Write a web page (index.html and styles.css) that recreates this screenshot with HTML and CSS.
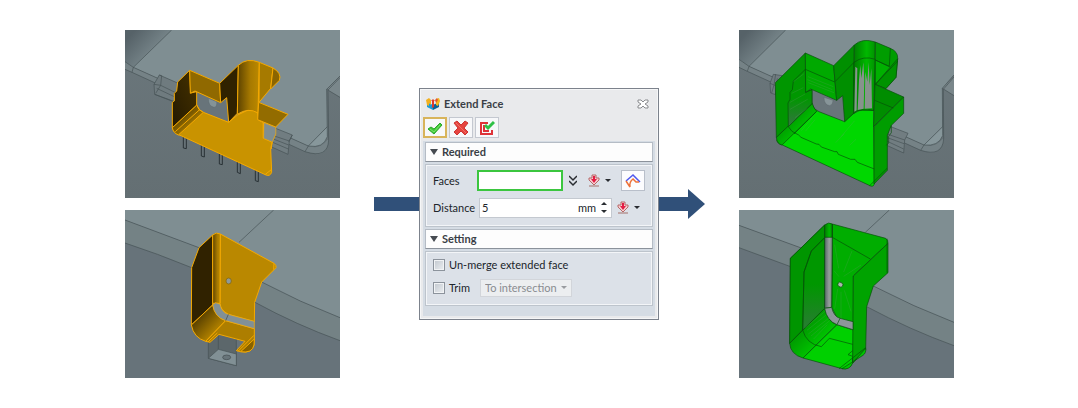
FILE: index.html
```html
<!DOCTYPE html>
<html lang="en">
<head>
    <meta charset="UTF-8">
    <meta name="viewport" content="width=device-width, initial-scale=1.0">
    <title>Extend Face</title>
    <link rel="stylesheet" href="styles.css">
</head>
<body>
    <main class="comparison">
        <div class="views">
            <svg class="view" viewBox="15 15 645 504" role="img" aria-label="Clip before extending">
                <defs>
                    <linearGradient id="plateShade" x1="0" y1="0.3" x2="0.7" y2="0.8">
                        <stop offset="0" stop-color="#566268"/>
                        <stop offset="1" stop-color="#7f8e92"/>
                    </linearGradient>
                    <linearGradient id="base" x1="0" y1="0" x2="0" y2="1">
                        <stop offset="0" stop-color="#6b777c"/>
                        <stop offset="1" stop-color="#646f73"/>
                    </linearGradient>
                    <linearGradient id="goldRound">
                        <stop offset="0" stop-color="#5c4200"/>
                        <stop offset="0.6" stop-color="#a87a00"/>
                        <stop offset="1" stop-color="#bb8900"/>
                    </linearGradient>
                    <linearGradient id="goldDark" x1="1" y1="0" x2="0" y2="1">
                        <stop offset="0" stop-color="#463200"/>
                        <stop offset="1" stop-color="#241900"/>
                    </linearGradient>
                    <linearGradient id="goldFillet" x1="0" y1="0" x2="1" y2="1">
                        <stop offset="0.2" stop-color="#4a3600"/>
                        <stop offset="0.8" stop-color="#c18d00"/>
                    </linearGradient>
                </defs>
                <rect x="15" y="15" width="645" height="504" fill="url(#base)"/>
                <path fill="#7f8e92" d="M15 15H660V153L620 193L622 305L565 363L40 127L15 110Z"/>
                <path fill="url(#plateShade)" d="M15 15H155L40 127L15 110Z"/>
                <path fill="#758286" d="M15 110L40 127L565 363Q600 375 622 345L626 345Q624 386 590 388L555 380L36 142L15 133Z"/>
                <path fill="#87979b" d="M622 305L565 363Q612 371 622 335Z"/>
                <path fill="#7a878b" d="M620 193L660 155V217Z"/>
                <g class="edge">
                    <path d="M155 15L40 127L36 142M15 110L40 127L565 363Q610 371 622 335M15 133L36 142L555 380Q624 402 626 345L624 197M660 153L620 193L622 335M565 363L555 380M622 305L565 363M624 195L660 158M620 193L660 217"/>
                    <path fill="#6f7b7f" d="M118 150L175 175L170 232L104 208L102 178Z"/>
                    <path d="M118 150L125 152L122 181L107 205M102 178L122 181L165 202M110 190L165 216M104 208L160 230"/>
                    <path fill="#717d81" d="M462 308L517 330L508 348L504 388L455 366Z"/>
                    <path d="M460 332L508 348M460 342L506 360M458 352L505 372M517 330L506 350"/>
                    <path class="pin" d="M190 335V369L199 371V340M244 360V393L253 396V365M298 385V417L307 419V390M352 408V442L361 446V414M406 433V467L415 470V440"/>
                </g>
                <path fill="#68747a" d="M230 200L302 233L320 220L326 292L250 262L230 240Z"/>
                <path fill="#849397" stroke="#525e62" d="M265 220Q265 244 282 247Q292 246 290 230Z"/>
                <g class="gold">
                    <path fill="#c99300" d="M230 240Q237 257 250 262L326 292Q352 266 380 257Q402 253 413 262L415 285L430 293V340L457 352L452 370L455 442Q450 455 438 450L185 333Q160 325 157 308Z"/>
                    <path fill="url(#goldFillet)" d="M157 308L230 240Q235 257 250 262L175 330Q159 323 157 308Z"/>
                    <path fill="url(#goldDark)" d="M173 171L209 136L212 204L230 200V240L157 308V232L163 228V205L170 198Z"/>
                    <path fill="#906900" d="M209 136L299 175L302 233L225 198L211 205Z"/>
                    <path fill="#302200" d="M299 175L355 121L352 265L326 292L320 218L302 233Z"/>
                    <path fill="url(#goldRound)" d="M355 121Q380 97 418 112L414 264Q385 246 352 268Z"/>
                    <path fill="#a67a00" d="M418 112L459 129L452 190L417 232Z"/>
                    <path fill="#8b6500" d="M459 129Q486 145 478 166L452 192Z"/>
                    <path fill="#936c00" d="M416 232L504 268L467 306L413 284Z"/>
                    <path fill="none" d="M166 320L240 253M430 293V340M467 306V328L456 352L454 372M436 448L454 434"/>
                </g>
                <path fill="#7f8e92" stroke="#ffb000" d="M432 294L467 308V326L457 350L431 340Z"/>
            </svg>
            <svg class="view" viewBox="15 15 645 504" role="img" aria-label="Pocket before extending">
                <rect x="15" y="15" width="645" height="504" fill="#67737a"/>
                <path fill="#7f8e92" d="M15 15H660V338Q540 292 425 231L237 128L15 45Z"/>
                <path fill="#748285" d="M15 45L237 128L425 231Q540 292 660 338V407Q530 360 405 292L215 188Q110 145 15 114Z"/>
                <path class="edge" d="M461 15L357 112M15 45L237 128M15 114Q110 145 215 188M425 231Q540 292 660 338M405 292Q530 360 660 407"/>
                <path fill="#5c676b" class="edge" d="M265 410L297 385L349 402V482L265 460Z"/>
                <path fill="#819095" class="edge" d="M265 460L295 433L349 447V482Z"/>
                <path class="edge" d="M295 385V433"/>
                <ellipse cx="320" cy="457" rx="12" ry="7" fill="#68757a" stroke="#414a4e" stroke-width="2"/>
                <g class="gold">
                    <path fill="#ba8800" d="M301 87L462 175Q470 181 468 188L425 231L404 292L403 350L325 328Q300 314 300 295Z"/>
                    <path fill="#302200" d="M237 128L278 90V300L214 360L215 188Z"/>
                    <path fill="url(#goldRound)" d="M278 90Q289 80 301 87L300 295H278Z"/>
                    <path fill="url(#goldFillet)" d="M214 360L278 300Q286 337 317 347L257 409Q221 398 214 360Z"/>
                    <path fill="#ad7e00" d="M317 347L403 371V402L402 420Q394 446 362 440L349 437L375 409L297 388L270 412L257 409Z"/>
                    <path fill="#876200" d="M403 402L362 440Q397 446 402 420Z"/>
                    <path fill="none" d="M264 411L292 384M354 439L402 391M462 175L461 194"/>
                </g>
                <path fill="#819096" stroke="#ffb000" stroke-width="2" d="M278 300L286 293L300 297Q305 323 325 328L403 349V371L317 347Q283 336 278 300Z"/>
                <path fill="none" stroke="#434c4f" stroke-width="2" d="M325 328L317 347"/>
                <ellipse cx="326" cy="228" rx="8" ry="9" fill="#8d999a" stroke="#816000" stroke-width="2"/>
            </svg>
        </div>

        <div class="process">
            <span class="arrow"><span class="connector"></span></span>
            <form class="dialog" aria-labelledby="dialogTitle">
                <header class="titlebar">
                    <svg class="logo" viewBox="0 0 14 14" aria-hidden="true">
                        <path fill="#1c9bd6" d="M1 5L7 8V13L1 10Z"/>
                        <path fill="#0b6297" d="M7 8L13 5V10L7 13Z"/>
                        <path fill="#f2b01e" d="M0 3L3 1L5 3V8L3 6V9L1 8Z"/>
                        <path fill="#de3a2c" d="M5 4L7 2L9 4H8V10L6 11V4Z"/>
                        <path fill="#f5b81b" d="M10 2L13 1L14 4L12 9L10 8Z"/>
                        <path fill="#e0592b" d="M9 3L11 1L12 3L10 6Z"/>
                    </svg>
                    <h1 id="dialogTitle">Extend Face</h1>
                    <button type="button" class="close" aria-label="Close">
                        <svg viewBox="0 0 12 10" aria-hidden="true"><path fill="#fff" stroke="#898b8e" d="M1 1H4L6 3L8 1H11V3L8 5L11 7V9H8L6 7L4 9H1V7L4 5L1 3Z"/></svg>
                    </button>
                </header>
                <div class="toolbar">
                    <button type="submit" class="tool active" aria-label="OK">
                        <svg viewBox="0 0 16 16" aria-hidden="true"><path fill="#3cc936" stroke="#2fa52c" d="M1 9L4 7L7 9L13 3L15 5L7 14Z"/><path stroke="#7fe26e" fill="none" d="M3 9L7 12L13 5"/></svg>
                    </button>
                    <button type="button" class="tool" aria-label="Cancel">
                        <svg viewBox="0 0 16 16" aria-hidden="true"><path fill="#e6443f" stroke="#cc3532" d="M1 3L4 1L8 5L12 1L15 3L11 8L15 12L12 15L8 11L4 15L1 12L5 8Z"/><path stroke="#ee7068" fill="none" d="M3 3L13 13"/></svg>
                    </button>
                    <button type="button" class="tool" aria-label="Apply">
                        <svg viewBox="0 0 16 16" aria-hidden="true"><path fill="none" stroke="#de3338" stroke-width="2" d="M9 3H2V14H13V10M8 6H5V11H10"/><path fill="none" stroke="#2fc146" stroke-width="3" d="M6 5L9 8L15 2"/></svg>
                    </button>
                </div>
                <div class="sections">
                    <section>
                        <h2><span class="triangle"></span>Required</h2>
                        <div class="panel required">
                            <div class="row">
                                <label class="name" for="faces">Faces</label>
                                <input class="faces" type="text" id="faces">
                                <button type="button" class="plain more" aria-label="More options">
                                    <svg viewBox="0 0 8 12" aria-hidden="true"><path fill="none" stroke="#292c31" stroke-width="1.5" d="M0 1L4 5L8 1M0 6L4 10L8 6"/></svg>
                                </button>
                                <button type="button" class="plain pick" aria-label="Pick faces">
                                    <svg class="down" viewBox="0 0 12 13" aria-hidden="true"><path fill="#f6d0d0" stroke="#b76768" d="M4 1H8V4H11V6L6 11L1 6V4H4Z"/><path fill="#e31d45" d="M5 2H7V5H9L6 9L3 5H5Z"/><path stroke="#a4706b" d="M1 12H11"/></svg>
                                    <span class="caret"></span>
                                </button>
                                <button type="button" class="curve" aria-label="Select curve">
                                    <svg viewBox="0 0 16 16" aria-hidden="true"><path fill="none" stroke="#5058ee" stroke-width="1.5" d="M1 8L8 2L15 9"/><path fill="none" stroke="#ed7139" stroke-width="1.5" d="M1 8L5 14Q4 9 8 6L11 9H14"/></svg>
                                </button>
                            </div>
                            <div class="row">
                                <label class="name" for="distance">Distance</label>
                                <div class="distance">
                                    <input type="text" id="distance" value="5">
                                    <span>mm</span>
                                    <span class="spinner">
                                        <button type="button" class="plain" aria-label="Increase"><span class="up"></span></button>
                                        <button type="button" class="plain" aria-label="Decrease"><span class="caret"></span></button>
                                    </span>
                                </div>
                                <button type="button" class="plain pick" aria-label="Distance options">
                                    <svg class="down" viewBox="0 0 12 13" aria-hidden="true"><path fill="#f6d0d0" stroke="#b76768" d="M4 1H8V4H11V6L6 11L1 6V4H4Z"/><path fill="#e31d45" d="M5 2H7V5H9L6 9L3 5H5Z"/><path stroke="#a4706b" d="M1 12H11"/></svg>
                                    <span class="caret"></span>
                                </button>
                            </div>
                        </div>
                    </section>
                    <section>
                        <h2><span class="triangle"></span>Setting</h2>
                        <div class="panel setting">
                            <div class="row">
                                <input type="checkbox" id="unmerge">
                                <label for="unmerge">Un-merge extended face</label>
                            </div>
                            <div class="row">
                                <input type="checkbox" id="trim">
                                <label for="trim">Trim</label>
                                <div class="select">
                                    <select aria-label="Trim type" disabled>
                                        <option>To intersection</option>
                                    </select>
                                    <span class="caret"></span>
                                </div>
                            </div>
                        </div>
                    </section>
                </div>
            </form>
            <span class="arrow">
                <span class="connector"></span>
                <svg class="arrowhead" viewBox="0 0 17 30" aria-hidden="true"><path fill="#305079" d="M0 0L17 15L0 30Z"/></svg>
            </span>
        </div>

        <div class="views">
            <svg class="view" viewBox="15 15 645 504" role="img" aria-label="Clip after extending">
                <defs>
                    <linearGradient id="greenRound">
                        <stop offset="0" stop-color="#007c00"/>
                        <stop offset="0.6" stop-color="#00b800"/>
                        <stop offset="1" stop-color="#009200"/>
                    </linearGradient>
                    <linearGradient id="greenFillet" x1="0" y1="0" x2="1" y2="1">
                        <stop offset="0.2" stop-color="#008700"/>
                        <stop offset="0.8" stop-color="#00d500"/>
                    </linearGradient>
                    <linearGradient id="silver">
                        <stop offset="0" stop-color="#546167"/>
                        <stop offset="0.6" stop-color="#99a19f"/>
                        <stop offset="1" stop-color="#6f8078"/>
                    </linearGradient>
                    <linearGradient id="greenGrey" x1="0" y1="0" x2="0" y2="1">
                        <stop offset="0.5" stop-color="#009700"/>
                        <stop offset="1" stop-color="#367343"/>
                    </linearGradient>
                </defs>
                <rect x="15" y="15" width="645" height="504" fill="url(#base)"/>
                <path fill="#7f8e92" d="M15 15H660V150L625 190V305L570 360L45 124L15 103Z"/>
                <path fill="url(#plateShade)" d="M15 15H155L45 124L15 103Z"/>
                <path fill="#758286" d="M15 103L45 124L570 360Q600 371 626 342L629 342Q625 383 590 383L560 376L40 139L15 127Z"/>
                <path fill="#87979b" d="M626 305L570 360Q613 365 626 332Z"/>
                <path fill="#7a878b" d="M625 190L660 155V212Z"/>
                <g class="edge">
                    <path d="M155 15L45 124L40 139M15 103L45 124L570 360Q613 365 626 332M15 127L40 139L560 376Q625 397 629 342L628 193M660 150L625 190L626 332M570 360L560 376M626 305L570 360M628 193L660 156M625 190L660 212"/>
                    <path fill="#6f7b7f" d="M118 148L145 152L125 209L110 204L108 175Z"/>
                    <path d="M125 147L120 180L113 204M130 160L124 208M108 175L125 182"/>
                    <path fill="#717d81" d="M465 303L522 325L512 345L509 384L458 361Z"/>
                    <path d="M462 328L512 345M460 338L510 356M458 348L509 372"/>
                </g>
                <path fill="#69757a" d="M234 192L308 226L326 210L332 290L255 260L234 240Z"/>
                <path fill="#879599" stroke="#525e62" d="M270 217Q270 240 287 242Q297 240 297 226Z"/>
                <g class="green">
                    <path fill="#00d700" d="M128 345L234 238Q240 255 255 260L332 290Q358 260 385 254L419 256V300L421 475Q420 486 410 483L145 360Q130 357 128 345Z"/>
                    <path fill="url(#greenFillet)" d="M127 337L234 233Q239 250 248 259L144 360Q129 356 127 337Z"/>
                    <path fill="#009600" d="M214 84L124 173L127 337L234 236V192L215 202Z"/>
                    <path fill="url(#greenGrey)" d="M214 133L178 168L175 194L168 202V223L162 234L163 305L234 236V194L215 202Z"/>
                    <path fill="#00a900" d="M214 84L299 122L308 226L230 192L215 202Z"/>
                    <path fill="#008f00" d="M299 122L361 60L359 265L332 290L326 212L308 226Z"/>
                    <path fill="url(#greenRound)" d="M361 60Q385 38 424 51L420 256H359Z"/>
                    <path fill="url(#greenRound)" d="M360 112Q388 91 424 103L419 256Q382 246 359 265Z"/>
                    <path class="streak" fill="#87938d" d="M364 125L370 130L368 256L361 260ZM375 165L379 120L382 160L388 112L391 165L389 251L371 255ZM394 140L400 170L404 112L407 180L412 130L414 250L392 251Z"/>
                    <path fill="#009d00" d="M424 51L469 70Q493 80 491 101L486 157L456 189L424 178Z"/>
                    <path fill="#00b000" d="M424 105L465 124L479 135L424 178Z"/>
                    <path fill="#009300" d="M491 101L486 157L456 191L424 178Z"/>
                    <path fill="#008d00" d="M423 178L509 216L419 305Z"/>
                    <path fill="#009d00" d="M509 216V265L472 301L460 331V436L420 477V305Z"/>
                    <path fill="none" d="M214 133L302 171M304 169L360 112M424 105L465 124M422 226L478 249M469 70L466 124M424 178L491 108M472 301V323L464 334V354L457 361M180 327L248 259"/>
                    <path fill="none" d="M163 305L174 319L194 330L201 337L247 357L255 358L262 366L302 380L309 380L313 388L350 403L363 403L370 412L421 432M407 482L459 430"/>
                </g>
                <g class="glint">
                    <path d="M222 155L298 185M220 164L295 194M223 173L300 203M178 170L209 147M173 205L208 188M168 232L213 207M168 253L221 223M183 278L220 250"/>
                    <path d="M202 317L235 278M214 319L243 284M305 353L331 326M321 335L362 287M347 361L366 343"/>
                </g>
            </svg>
            <svg class="view" viewBox="15 15 645 504" role="img" aria-label="Pocket after extending">
                <rect x="15" y="15" width="645" height="504" fill="#67737a"/>
                <path fill="#7f8e92" d="M15 15H660V352Q540 306 418 243L202 129L15 61Z"/>
                <path fill="#748285" d="M15 61L202 129L418 243Q540 306 660 352V422Q530 375 398 305L170 185L15 128Z"/>
                <path class="edge" d="M466 15L394 82M15 61L202 129M15 128L170 185M418 243Q540 306 660 352M398 305Q530 375 660 422"/>
                <g class="green">
                    <path fill="#00ad00" d="M295 57L455 100Q463 105 462 115L358 213V374L315 350L293 307Z"/>
                    <path fill="url(#greenGrey)" d="M169 160L272 60V310L167 415Z"/>
                    <path fill="#009500" d="M169 160L272 60V98L232 138L210 201L206 375L167 415Z"/>
                    <path fill="url(#greenRound)" d="M272 60Q284 50 295 57L293 307H272Z"/>
                    <path fill="url(#silver)" d="M272 97H295L293 307L272 310Z"/>
                    <path fill="url(#greenFillet)" d="M167 415L272 310Q285 354 309 359L207 459Q169 448 167 415Z"/>
                    <path fill="#00d000" d="M309 359L358 375L357 472Q344 495 324 491L207 459Z"/>
                    <path fill="#00a300" d="M462 115V203L418 243L398 305L395 434L356 474L358 213Z"/>
                    <path fill="#8d9699" d="M272 310L293 307Q299 335 318 340L357 350V374L309 359Q278 347 272 310Z"/>
                    <path fill="#00c600" d="M395 430L356 474Q348 496 324 491L387 451Q397 444 395 430Z"/>
                    <path fill="none" d="M295 97L409 162M295 57V97M272 98L232 138L210 201L206 375Q217 417 262 425L286 400L356 418M318 340L309 359M356 437L342 449L356 454M315 491L395 428M459 101V203M356 474L355 458"/>
                    <ellipse cx="319" cy="239" rx="8" ry="7" fill="#aab7ae" transform="rotate(35 319 239)"/>
                </g>
                <g class="glint">
                    <path d="M214 368L278 315M219 376L284 324M223 387L294 332M231 393L287 347M239 402L280 359M277 112V292M287 115V296"/>
                    <path d="M302 119L314 190M354 138L329 201M315 215L300 197M329 214L381 180M321 260V340M311 252L302 311M331 256L351 319"/>
                </g>
            </svg>
        </div>
    </main>
</body>
</html>
```
FILE: styles.css
```css
* {
    box-sizing: border-box;
}
body {
    margin: 0;
    min-height: 100vh;
    display: flex;
    justify-content: center;
    align-items: center;
    background: #fff;
    color: #20242a;
    font-family: Lato, "Open Sans", sans-serif;
    font-size: 11px;
    line-height: 16px;
}
button, input, select {
    font: inherit;
    color: inherit;
    margin: 0;
    padding: 0;
}
button {
    display: flex;
    justify-content: center;
    align-items: center;
    cursor: pointer;
}
.comparison {
    width: 100%;
    max-width: 829px;
    display: grid;
    grid-template-columns: 215fr 331fr 215fr;
    gap: 34px;
    align-items: center;
}
.views {
    display: grid;
    gap: 12px;
}
.view {
    display: block;
    width: 100%;
}
.edge {
    stroke: #465155;
    stroke-width: 2;
}
.edge path:not([fill]), path.edge:not([fill]) {
    fill: none;
}
.edge .pin {
    stroke: #293236;
    stroke-width: 3;
}
.gold {
    stroke: #f5a900;
    stroke-width: 3;
    stroke-linejoin: round;
}
.green {
    stroke: #064f09;
    stroke-width: 2;
    stroke-linejoin: round;
}
.green .streak {
    stroke: none;
}
.glint {
    fill: none;
    stroke: #759a78;
    stroke-width: 1;
    opacity: 0.6;
}

/* dialog between the two arrow pieces */
.process {
    display: flex;
    align-items: center;
}
.arrow {
    flex: 1 1 0;
    display: flex;
    align-items: center;
}
.connector {
    flex: 1;
    height: 14px;
    background: #305079;
}
.arrowhead {
    width: 17px;
    height: 30px;
}
.dialog {
    flex: 0 0 240px;
    padding: 6px 3px 3px;
    border: 1px solid #7c828c;
    background: #e9eaec;
    box-shadow: inset 0 0 0 1px #f5f6f7;
}
.titlebar {
    display: flex;
    align-items: center;
    gap: 4px;
    height: 18px;
    padding: 0 6px 0 3px;
}
.logo {
    width: 14px;
    height: 14px;
}
h1, h2 {
    margin: 0;
    font-size: 11px;
    font-weight: 700;
    line-height: 16px;
    color: #3a3f46;
}
.close {
    width: 12px;
    height: 10px;
    margin-left: auto;
    border: 0;
    background: none;
}
.close svg {
    width: 12px;
    height: 10px;
}
.toolbar {
    display: flex;
    gap: 2px;
    margin: 4px 0 3px;
}
.tool {
    width: 24px;
    height: 21px;
    border: 1px solid #c4c8d0;
    background: #f7f8fa;
}
.tool svg, .curve svg {
    width: 16px;
    height: 16px;
}
.active {
    border: 2px solid #d8b45b;
}
.sections {
    display: grid;
    gap: 2px;
    padding: 1px 2px 10px;
    background: #d5dce4;
}
h2 {
    display: flex;
    align-items: center;
    gap: 4px;
    height: 20px;
    padding-left: 4px;
    border: 1px solid #b5bcc5;
    border-bottom-color: #8b929b;
    background: #fdfdfd;
}
.triangle {
    border: 4px solid transparent;
    border-top: 6px solid #464b51;
    border-bottom: 0;
}
.panel {
    display: grid;
    align-content: start;
    margin-top: 2px;
    padding: 5px 7px 8px;
    border: 1px solid #bdc4cc;
    background: #dce1e8;
    box-shadow: inset 0 0 0 1px #f3f5f8;
}
.required {
    gap: 6px;
}
.setting {
    gap: 4px;
    padding-top: 3px;
}
.row {
    display: flex;
    align-items: center;
    min-height: 21px;
}
.setting .row {
    min-height: 19px;
}
.name {
    flex: 0 0 46px;
}
.faces {
    width: 86px;
    height: 21px;
    margin-left: -2px;
    border: 2px solid #3bc63f;
    background: #fff;
}
.plain {
    border: 0;
    background: none;
}
.more {
    width: 8px;
    margin-left: 6px;
}
.more svg {
    width: 8px;
    height: 12px;
}
.pick {
    gap: 5px;
    margin-left: 11px;
}
.down {
    width: 12px;
    height: 13px;
}
.caret, .up {
    border: 3px solid transparent;
    border-top-color: #292c31;
    border-bottom: 0;
}
.up {
    border-top: 0;
    border-bottom: 3px solid #292c31;
}
.curve {
    width: 24px;
    height: 21px;
    margin-left: auto;
    border: 1px solid #b9bfca;
    background: #fcfcfe;
}
.distance {
    display: flex;
    align-items: center;
    width: 133px;
    height: 20px;
    padding: 0 4px 0 2px;
    border: 1px solid #c4c9d0;
    background: #fff;
}
.distance input {
    flex: 1;
    min-width: 0;
    border: 0;
    background: none;
}
.distance + .pick {
    margin-left: 5px;
}
.spinner {
    display: grid;
    gap: 5px;
    margin-left: 5px;
}
input[type="checkbox"] {
    appearance: none;
    width: 12px;
    height: 12px;
    margin-right: 4px;
    border: 1px solid #8c939c;
    background: linear-gradient(135deg, #c1c7ce, #eceff2);
    box-shadow: inset 0 0 0 1px #f1f3f5;
}
.select {
    display: flex;
    align-items: center;
    width: 92px;
    height: 18px;
    margin-left: 10px;
    padding: 0 4px;
    border: 1px solid #d2d5da;
    background: #eceef0;
    color: #898c90;
}
.select select {
    flex: 1;
    min-width: 0;
    appearance: none;
    border: 0;
    background: none;
    opacity: 1;
}
.select .caret {
    border-top-color: #999ca0;
}
```
